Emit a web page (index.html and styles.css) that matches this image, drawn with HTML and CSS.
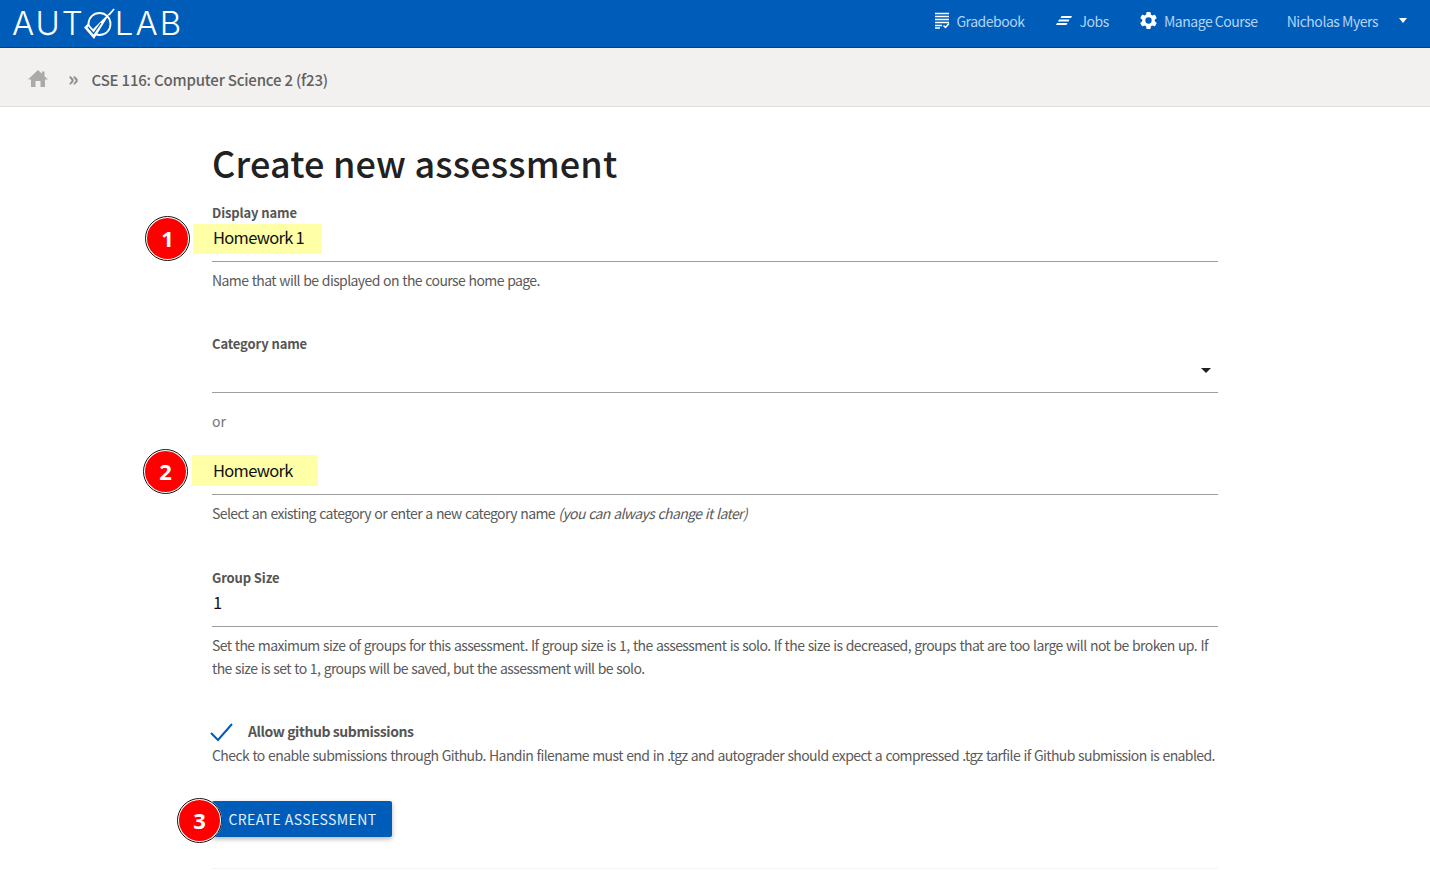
FILE: index.html
```html
<!DOCTYPE html>
<html lang="en">
<head>
<meta charset="utf-8">
<title>Create new assessment</title>
<link rel="stylesheet" href="styles.css">
</head>
<body>
<header class="nav">
  <a class="logo"><span>AUT</span><svg class="logo-o" viewBox="0 0 32 32" width="32" height="32" aria-hidden="true"><circle cx="16.500" cy="16" r="11" fill="none" stroke="#fff" stroke-width="1.800"/><path d="M31 1 L26 7" stroke="#fff" stroke-width="1.800" fill="none"/><path d="M1 19.500 L5 15.500 L10 21 L28 3.500 L11 31 Z" fill="#fff"/><path d="M5 19 L10.500 25.500 L18 15" stroke="#005cb9" stroke-width="1.200" fill="none"/></svg><span>LAB</span></a>
  <nav class="nav-links">
    <a class="nav-item gradebook"><svg width="16" height="17" viewBox="0 0 16 17" aria-hidden="true"><path d="M1 1.500H15M1 4.500H15M1 7.500H15M1 10.500H15M1 13.500H8M1 16H6" stroke="#fff" stroke-width="1.500" fill="none"/><path d="M9.500 13.500L11.500 15.500L15 11.500" stroke="#fff" stroke-width="1.500" fill="none"/></svg>Gradebook</a>
    <a class="nav-item jobs"><svg width="16" height="9" viewBox="0 0 16 9" aria-hidden="true"><path fill="#fff" d="M5.500 0H16L15 2H4.500ZM3 3.500H13.500L12.500 5.500H2ZM1 7H11.500L10.500 9H0Z"/></svg>Jobs</a>
    <a class="nav-item manage"><svg width="21" height="21" viewBox="0 0 24 24" aria-hidden="true"><path fill="#fff" d="M19.140 12.940c.04-.3.060-.61.060-.94s-.02-.64-.07-.94l2.030-1.580a.5.500 0 0 0 .12-.61l-1.920-3.320a.5.500 0 0 0-.59-.22l-2.390.96a7 7 0 0 0-1.620-.94l-.36-2.540a.5.500 0 0 0-.48-.41h-3.840a.5.500 0 0 0-.47.41l-.36 2.540c-.59.24-1.130.57-1.620.94l-2.390-.96a.5.500 0 0 0-.59.22L2.740 8.870a.5.500 0 0 0 .12.61l2.030 1.580c-.05.3-.09.63-.09.94s.02.64.07.94l-2.030 1.580a.5.500 0 0 0-.12.61l1.920 3.320c.12.22.37.29.59.22l2.390-.96c.5.380 1.030.7 1.620.94l.36 2.540c.05.24.24.41.48.41h3.840c.24 0 .44-.17.47-.41l.36-2.540c.59-.24 1.130-.56 1.620-.94l2.390.96c.22.080.47 0 .59-.22l1.920-3.320a.5.500 0 0 0-.12-.61l-2.010-1.580zM12 15.600A3.600 3.600 0 1 1 12 8.400a3.600 3.600 0 0 1 0 7.200z"/></svg>Manage Course</a>
    <a class="nav-item user">Nicholas Myers<span class="caret"></span></a>
  </nav>
</header>

<div class="crumbs">
  <svg class="home" width="20" height="17" viewBox="0 0 20 17" aria-hidden="true"><path fill="#aaa" d="M10 0 L14 3.800V1.500H16.500V6.200L20 9.500H17V17H12.500V11H7.500V17H3V9.500H0Z"/></svg>
  <span class="sep">»</span>
  <a class="crumb">CSE 116: Computer Science 2 (f23)</a>
</div>

<main class="page">
  <h1 class="title">Create new assessment</h1>

  <section class="field first">
    <label class="label">Display name</label>
    <div class="input">
      <span class="hl hl-one"></span>
      <span class="badge badge-one">1</span>
      <span class="value">Homework 1</span>
    </div>
    <p class="help">Name that will be displayed on the course home page.</p>
  </section>

  <section class="field category">
    <label class="label">Category name</label>
    <div class="select"><span class="select-caret"></span></div>
  </section>
  <p class="or">or</p>
  <section class="field new-cat">
    <div class="input">
      <span class="hl hl-two"></span>
      <span class="badge badge-two">2</span>
      <span class="value">Homework</span>
    </div>
    <p class="help">Select an existing category or enter a new category name <em>(you can always change it later)</em></p>
  </section>

  <section class="field group">
    <label class="label">Group Size</label>
    <div class="input"><span class="value">1</span></div>
    <p class="help">Set the maximum size of groups for this assessment. If group size is 1, the assessment is solo. If the size is decreased, groups that are too large will not be broken up. If the size is set to 1, groups will be saved, but the assessment will be solo.</p>
  </section>

  <div class="check-row">
    <svg class="check" width="24" height="20" viewBox="0 0 24 20" aria-hidden="true"><path d="M1 11 L8 18 L22 2" fill="none" stroke="#005cb9" stroke-width="2"/></svg>
    <span class="check-label">Allow github submissions</span>
  </div>
  <p class="help check-help">Check to enable submissions through Github. Handin filename must end in .tgz and autograder should expect a compressed .tgz tarfile if Github submission is enabled.</p>

  <div class="actions">
    <span class="badge badge-three">3</span>
    <button class="btn">CREATE ASSESSMENT</button>
  </div>
  <hr class="rule">
</main>
</body>
</html>
```
FILE: styles.css
```css
* { box-sizing: border-box; }
html, body { margin: 0; padding: 0; }
body {
  background: #fff;
  font-family: "Noto Sans CJK JP", "Noto Sans", sans-serif;
  color: #212121;
  height: 870px;
  overflow: hidden;
}
.nav {
  height: 48px;
  background: #005cb9;
  border-bottom: 1px solid #00427f;
  display: flex;
  align-items: center;
  justify-content: space-between;
  padding: 0 23px 0 12px;
}
.logo {
  display: flex;
  align-items: center;
  font-family: Inter, Lato, sans-serif;
  font-weight: 300;
  font-size: 33px;
  line-height: 47px;
  letter-spacing: 2px;
  color: #fff;
}
.logo-o { margin: 0 0 0 -2px; }
.nav-links { display: flex; align-items: center; height: 47px; padding-bottom: 6px; }
.nav-item {
  display: flex;
  align-items: center;
  color: #b3d4f5;
  font-size: 14px;
  letter-spacing: -.47px;
  line-height: 22px;
}
.nav-item svg { margin-right: 6px; }
.gradebook { margin-right: 31px; }
.jobs { margin-right: 29px; }
.jobs svg { margin-right: 8px; }
.manage { margin-right: 29px; }
.manage svg { margin-right: 5px; }
.caret, .select-caret {
  width: 0;
  height: 0;
  border-left: 5px solid transparent;
  border-right: 5px solid transparent;
}
.caret { border-left-width: 4.500px; border-right-width: 4.500px; border-top: 5px solid #fff; margin-left: 21px; }
.crumbs {
  height: 59px;
  background: #f2f1f0;
  border-bottom: 1px solid #dfdfdf;
  display: flex;
  align-items: center;
  padding-left: 28px;
}
.home { margin: 3px 20px 0 0; }
.sep { color: #8a8a8a; font-size: 20px; font-weight: 700; margin-right: 13px; padding-top: 1px; }
.crumb { color: #616161; font-size: 15px; letter-spacing: -.2px; font-weight: 500; padding-top: 4px; }
.page { padding: 0 212px; }
.title {
  margin: 0;
  padding: 29px 0 0;
  font-size: 36px;
  letter-spacing: .18px;
  font-weight: 500;
  line-height: 52px;
  color: #212121;
}
.field { display: block; }
.first { margin-top: 15px; }
.label {
  display: block;
  color: #555;
  font-size: 13px;
  letter-spacing: -.12px;
  font-weight: 700;
  line-height: 20px;
}
.input {
  position: relative;
  height: 39px;
  border-bottom: 1px solid #9e9e9e;
  padding: 1px 0 0 1px;
}
.value {
  position: relative;
  font-size: 16.500px;
  letter-spacing: -.7px;
  line-height: 26px;
  color: #111;
}
.hl { position: absolute; background: #ffffa8; }
.hl-one { left: -19px; top: 1px; width: 129px; height: 30px; }
.hl-two { left: -20px; top: -1px; width: 126px; height: 31px; }
.badge {
  position: absolute;
  width: 45px;
  height: 45px;
  border-radius: 50%;
  background: #f00;
  border: 2px solid #fff;
  outline: 1px solid #111;
  outline-offset: -1px;
  color: #fff;
  font-family: "Noto Sans", sans-serif;
  font-weight: 700;
  font-size: 22px;
  line-height: 41px;
  text-align: center;
  z-index: 2;
}
.badge-one { left: -67px; top: -7px; }
.badge-two { left: -69px; top: -7px; }
.help {
  margin: 7px 0 0;
  color: #5a5a5a;
  font-size: 14px;
  letter-spacing: -.6px;
  word-spacing: .8px;
  line-height: 23px;
}
.category { margin-top: 42px; }
.select {
  position: relative;
  height: 39px;
  border-bottom: 1px solid #9e9e9e;
}
.select-caret {
  position: absolute;
  right: 7px;
  top: 14px;
  border-top: 5px solid #212121;
}
.or { margin: 17px 0 0; color: #757575; font-size: 14px; line-height: 23px; }
.new-cat { margin-top: 0; padding-top: 23px; }
.group { margin-top: 43px; }
.check-row { display: flex; align-items: center; margin-top: 39px; height: 25px; }
.check { margin-right: 14px; margin-left: -2px; }
.check-label { color: #555; font-size: 14px; letter-spacing: -.42px; font-weight: 700; line-height: 24px; margin-top: -2px; }
.check-help { margin-top: 0; white-space: nowrap; }
.actions { position: relative; margin-top: 34px; height: 36px; }
.badge-three { left: -35px; top: -3px; }
.btn {
  height: 36px;
  width: 180px;
  background: #005cb9;
  color: #e3effb;
  border: 0;
  border-radius: 2px;
  font-family: inherit;
  font-size: 14px;
  letter-spacing: .4px;
  padding: 0 0 0 1px;
  box-shadow: 0 2px 5px rgba(0,0,0,.3);
}
.rule { margin: 31px 0 0; border: 0; border-top: 1px solid #f3f3f3; }
```
